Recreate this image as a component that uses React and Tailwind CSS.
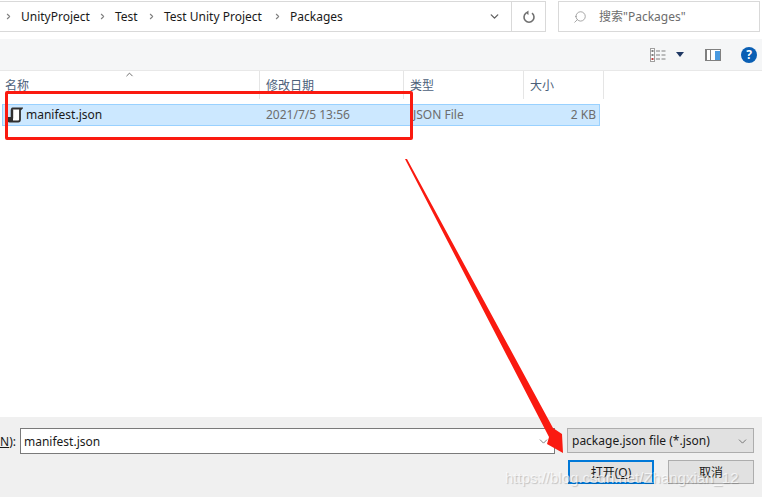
import React from "react";
import { ChevronDown, ChevronRight, Search } from "lucide-react";

const font = "font-['Noto_Sans','Noto_Sans_CJK_SC',sans-serif]";

const Crumb = ({ children, className }) => (
  <div className={`flex items-center ${className}`}>
    <ChevronRight className="w-[9px] h-[9px] text-[#808080] mr-[8px]" strokeWidth={3} />
    <span>{children}</span>
  </div>
);

const Column = ({ label, width, className = "" }) => (
  <div className={`h-[28px] pt-[6px] border-r border-[#e5e5e5] text-[12px] text-[#4c607a] ${className}`} style={{ width }}>
    {label}
  </div>
);

const FileIcon = () => (
  <svg width="16" height="16" viewBox="0 0 16 16" fill="none">
    <path d="M5.500 1.500H14.500L13 3v9.500c0 1.200-.6 2-1.800 2H2.500C1.500 14.500 1 13.800 1 13v-2h3.800V3c0-.9.2-1.500.7-1.500z" fill="#fff" stroke="#303030" strokeWidth="1.800" />
    <path d="M1 10h5v5H2.500L1 13.500z" fill="#303030" />
    <path d="M5 2.500v9" stroke="#303030" strokeWidth="2.400" />
  </svg>
);

const RefreshIcon = () => (
  <svg width="14" height="14" viewBox="0 0 14 14" fill="none">
    <path d="M4 3.200A5 5 0 1 0 10 3.200" stroke="#707070" strokeWidth="1.600" />
    <path d="M7 .5v4.500L3.800 2.800z" fill="#707070" transform="translate(-0.500 0)" />
  </svg>
);

const ViewIcon = () => (
  <svg width="16" height="14" viewBox="0 0 16 14">
    <rect x="0.500" y="0.500" width="4" height="13" fill="#fff" stroke="#a0a0a0" />
    <rect x="1.500" y="2" width="2" height="2" fill="#808080" />
    <rect x="1.500" y="6" width="2" height="2" fill="#808080" />
    <rect x="1.500" y="10" width="2" height="2" fill="#c04040" />
    <path d="M6 3h4M6 7h4M6 11h4M11.500 3h4M11.500 7h4M11.500 11h4" stroke="#808080" strokeWidth="1" />
  </svg>
);

const PaneIcon = () => (
  <svg width="16" height="12" viewBox="0 0 16 12">
    <rect x="0.500" y="0.500" width="15" height="11" fill="#fff" stroke="#808080" />
    <rect x="1" y="1" width="1" height="10" fill="#808080" />
    <rect x="5" y="1" width="1" height="10" fill="#808080" />
    <rect x="10" y="2" width="5" height="9" fill="#4a9ae0" />
  </svg>
);

export default function App() {
  return (
    <div className={`relative w-[762px] h-[497px] overflow-hidden bg-white text-black ${font}`}>
      {/* address bar */}
      <div className="flex items-start h-[39px] pt-[1px]">
        <div className="flex items-center w-[511px] h-[31px] border-b border-t border-[#d9d9d9] text-[12px] text-[#1a1a1a] pl-[4px]">
          <Crumb className="w-[94px]">UnityProject</Crumb>
          <Crumb className="w-[49px]">Test</Crumb>
          <Crumb className="w-[126px]">Test Unity Project</Crumb>
          <Crumb>Packages</Crumb>
          <ChevronDown className="w-[13px] h-[13px] text-[#606060] ml-auto mr-[10px]" strokeWidth={2.500} />
        </div>
        <div className="flex items-center justify-center w-[35px] h-[31px] border border-[#d9d9d9]">
          <RefreshIcon />
        </div>
        <div className="flex items-center w-[202px] h-[31px] ml-[12px] border border-[#d9d9d9] text-[12px] text-[#6d6d6d]">
          <Search className="w-[14px] h-[14px] ml-[14px] text-[#8c8c8c] -scale-x-100" strokeWidth={1.300} />
          <span className="ml-[12px]">搜索"Packages"</span>
        </div>
      </div>

      {/* toolbar */}
      <div className="flex items-center justify-end h-[31px] bg-[#f5f6f7] pr-[5px]">
        <ViewIcon />
        <div className="ml-[10px] w-0 h-0 border-x-[4px] border-x-transparent border-t-[5px] border-t-[#1f3864]" />
        <div className="ml-[21px]"><PaneIcon /></div>
        <div className="ml-[20px] flex items-center justify-center w-[16px] h-[16px] rounded-full bg-[#0a5fb4] text-white text-[12px] font-bold">?</div>
      </div>

      {/* column headers */}
      <div className="relative flex border-t border-[#e8e8e8]">
        <Column label="名称" width={260} className="pl-[5px]" />
        <Column label="修改日期" width={144} className="pl-[6px]" />
        <Column label="类型" width={120} className="pl-[6px]" />
        <Column label="大小" width={80} className="pl-[6px]" />
        <ChevronDown className="absolute left-[124px] -top-[2px] w-[11px] h-[11px] text-[#505050] rotate-180" strokeWidth={1.800} />
      </div>

      {/* selected file row */}
      <div className="flex items-center w-[598px] h-[22px] mt-[5px] ml-[2px] bg-[#cce8ff] border border-[#99d1ff] text-[12px]">
        <div className="flex items-center w-[263px]">
          <div className="ml-[4px] mr-[3px]"><FileIcon /></div>
          <span className="text-[#1a1a1a]">manifest.json</span>
        </div>
        <span className="w-[147px] text-[#6d6d6d]">2021/7/5 13:56</span>
        <span className="text-[#6d6d6d]">JSON File</span>
        <span className="ml-auto mr-[3px] text-[#6d6d6d]">2 KB</span>
      </div>

      {/* footer */}
      <div className="absolute left-0 right-0 bottom-0 h-[80px] bg-[#f0f0f0] text-[12px]">
        <div className="flex items-start pt-[11px]">
          <span className="w-[20px] pt-[5px] pr-[5px] text-right text-[#1a1a1a] whitespace-nowrap"><span className="underline">N</span>):</span>
          <div className="flex items-center justify-between w-[535px] h-[26px] bg-white border border-[#7a7a7a] pl-[3px] pr-[4px] pt-[1px] text-[#1a1a1a]">
            manifest.json
            <ChevronDown className="w-[13px] h-[13px] text-[#606060]" strokeWidth={1.500} />
          </div>
          <div className="flex items-center justify-between w-[187px] h-[25px] ml-[12px] bg-[#e1e1e1] border border-[#adadad] pl-[4px] pr-[4px] pt-[1px] text-[#1a1a1a]">
            package.json file (*.json)
            <ChevronDown className="w-[13px] h-[13px] text-[#606060]" strokeWidth={1.500} />
          </div>
        </div>
        <div className="flex justify-end gap-[14px] pr-[8px] mt-[6px]">
          <button className="w-[86px] h-[24px] pt-[1px] bg-[#e1e1e1] border-2 border-[#0078d7] text-[12px] text-[#1a1a1a]">打开(<span className="underline">O</span>)</button>
          <button className="w-[86px] h-[24px] pt-[1px] bg-[#e1e1e1] border border-[#adadad] text-[12px] text-[#1a1a1a]">取消</button>
        </div>
      </div>

      {/* red annotations */}
      <div className="absolute left-[5px] top-[91px] w-[408px] h-[49px] border-[3px] border-[#fa1a10] rounded-[2px]" />
      <svg className="absolute left-0 top-0 pointer-events-none" width="762" height="497">
        <polygon points="405,159 407,159 553,428 562,434 563,453 547,444 549,437" fill="#fa1a10" />
      </svg>

      {/* watermark */}
      <div className="absolute left-[505px] top-[468px] text-[15px] leading-[20px] text-white/70 [text-shadow:1px_1px_1px_rgba(0,0,0,0.2)] font-['Liberation_Sans',sans-serif] whitespace-nowrap">https://blog.csdn.net/Zhangxian_12</div>
    </div>
  );
}
